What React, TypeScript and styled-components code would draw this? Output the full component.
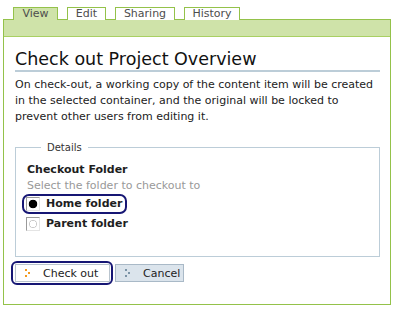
import React, { useState } from 'react';
import styled, { createGlobalStyle } from 'styled-components';

const GlobalStyle = createGlobalStyle`
  body {
    margin: 0;
    background: #fff;
    font-family: "DejaVu Sans", Verdana, sans-serif;
    color: #1e1e1e;
  }
`;

const tabs = [
  { label: 'View', width: 45 },
  { label: 'Edit', width: 39 },
  { label: 'Sharing', width: 60 },
  { label: 'History', width: 56 },
];

export default function App() {
  const [folder, setFolder] = useState('home');

  return (
    <>
      <GlobalStyle />
      <Page>
        <TabRow>
          {tabs.map((t, i) => (
            <Tab key={t.label} active={i === 0} w={t.width}>
              {t.label}
            </Tab>
          ))}
        </TabRow>
        <Panel>
          <GreenBar />
          <Content>
            <Title>Check out Project Overview</Title>
            <Intro>
              On check-out, a working copy of the content item will be created
              in the selected container, and the original will be locked to
              prevent other users from editing it.
            </Intro>
            <Fieldset>
              <Legend>Details</Legend>
              <FieldLabel>Checkout Folder</FieldLabel>
              <Hint>Select the folder to checkout to</Hint>
              <Option focused={folder === 'home'}>
                <Radio
                  type="radio"
                  name="folder"
                  checked={folder === 'home'}
                  onChange={() => setFolder('home')}
                />
                Home folder
              </Option>
              <Option focused={folder === 'parent'}>
                <Radio
                  type="radio"
                  name="folder"
                  checked={folder === 'parent'}
                  onChange={() => setFolder('parent')}
                />
                Parent folder
              </Option>
            </Fieldset>
            <ButtonRow>
              <FocusRing>
                <Button primary>
                  <Dots color="#f39a1e" />
                  Check out
                </Button>
              </FocusRing>
              <Button>
                <Dots color="#7b93a6" />
                Cancel
              </Button>
            </ButtonRow>
          </Content>
        </Panel>
      </Page>
    </>
  );
}

const Dots = ({ color }: { color: string }) => (
  <svg width="5" height="9" viewBox="0 0 5 9">
    <rect x="0" y="0" width="2" height="2" fill={color} />
    <rect x="3" y="3" width="2" height="2" fill={color} />
    <rect x="0" y="6" width="2" height="2" fill={color} />
  </svg>
);

const Page = styled.div`
  padding: 7px 9px 0 3px;
  width: 388px;
`;

const TabRow = styled.div`
  display: flex;
  gap: 9px;
  padding-left: 10px;
  height: 12px;
`;

const Tab = styled.div<{ active?: boolean; w: number }>`
  box-sizing: border-box;
  width: ${(p) => p.w}px;
  height: 13px;
  border: 1px solid #94c24a;
  border-bottom: none;
  background: ${(p) => (p.active ? '#cfe3a9' : '#fff')};
  color: #4d4d4d;
  font-size: 11px;
  line-height: 12px;
  text-align: center;
  position: relative;
  z-index: 1;
`;

const Panel = styled.div`
  border: 1px solid #94c24a;
  border-top: none;
  height: 286px;
  box-sizing: border-box;
`;

const GreenBar = styled.div`
  height: 16px;
  background: #cfe3a9;
  border-top: 1px solid #94c24a;
  border-bottom: 1px solid #a9d063;
`;

const Content = styled.div`
  padding: 12px 10px 0 11px;
`;

const Title = styled.h1`
  margin: 0;
  font-size: 17.5px;
  font-weight: normal;
  line-height: 20px;
  color: #111;
  border-bottom: 2px solid #bccdd8;
  padding-bottom: 1px;
`;

const Intro = styled.p`
  margin: 5px 0 0;
  font-size: 11px;
  line-height: 16px;
  color: #222;
`;

const Fieldset = styled.fieldset`
  margin: 17px 0 0;
  padding: 9px 11px 22px;
  border: 1px solid #bccdd8;
  min-width: 0;
`;

const Legend = styled.legend`
  margin-left: 14px;
  padding: 0 6px;
  font-size: 10px;
  color: #333;
`;

const FieldLabel = styled.div`
  font-size: 11px;
  font-weight: bold;
  line-height: 16px;
`;

const Hint = styled.div`
  font-size: 11px;
  color: #999;
  line-height: 16px;
`;

const Option = styled.label<{ focused: boolean }>`
  display: flex;
  width: fit-content;
  align-items: center;
  gap: 6px;
  margin-left: -5px;
  padding: 1px 3px 1px 2px;
  border: 2px solid ${(p) => (p.focused ? '#161674' : 'transparent')};
  border-radius: 7px;
  font-size: 11px;
  font-weight: bold;
  line-height: 14px;
  height: 14px;
`;

const Radio = styled.input`
  appearance: none;
  margin: 0;
  width: 14px;
  height: 14px;
  box-sizing: border-box;
  border-top: 1px solid #9a9a9a;
  border-left: 1px solid #9a9a9a;
  border-right: 1px solid #e4e4e4;
  border-bottom: 1px solid #e4e4e4;
  background: radial-gradient(circle at 50% 50%, transparent 3px, #c8c8c8 3.5px, transparent 4.5px);
  &:checked {
    background: radial-gradient(circle at 50% 50%, #000 4px, transparent 4.6px);
  }
`;

const ButtonRow = styled.div`
  display: flex;
  align-items: center;
  gap: 2px;
  margin-top: 4px;
  margin-left: -4px;
`;

const FocusRing = styled.div`
  border: 2px solid #161674;
  border-radius: 6px;
  padding: 1px 1px 1px 2px;
`;

const Button = styled.button<{ primary?: boolean }>`
  display: flex;
  align-items: center;
  gap: 13px;
  box-sizing: border-box;
  height: 18px;
  width: ${(p) => (p.primary ? '95px' : '69px')};
  padding: 0 0 0 9px;
  border: 1px solid ${(p) => (p.primary ? '#b9c4ce' : '#a9b9c7')};
  background: ${(p) => (p.primary ? '#fff' : '#dbe4ec')};
  font-family: "DejaVu Sans", Verdana, sans-serif;
  font-size: 11px;
  color: #222;
  cursor: pointer;
`;
